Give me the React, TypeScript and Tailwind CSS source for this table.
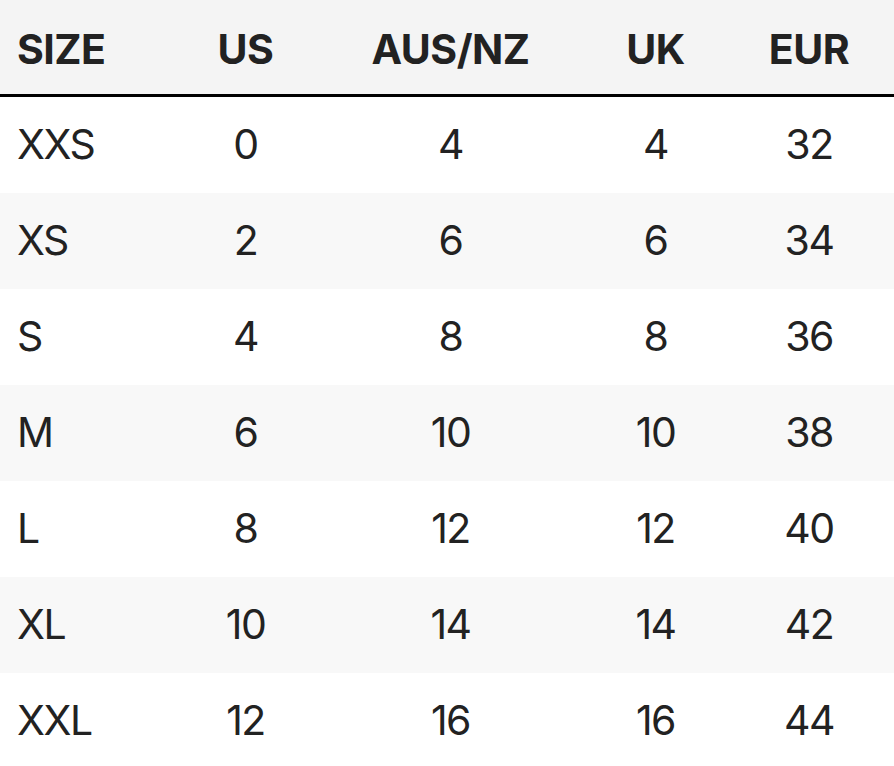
const HEADERS = ["SIZE", "US", "AUS/NZ", "UK", "EUR"];

const ROWS: [string, string, string, string, string][] = [
  ["XXS", "0", "4", "4", "32"],
  ["XS", "2", "6", "6", "34"],
  ["S", "4", "8", "8", "36"],
  ["M", "6", "10", "10", "38"],
  ["L", "8", "12", "12", "40"],
  ["XL", "10", "14", "14", "42"],
  ["XXL", "12", "16", "16", "44"],
];

const GRID = "grid grid-cols-[143px_205px_205px_205px_102px]";

export default function App() {
  return (
    <div className="h-[766px] w-[894px] overflow-hidden bg-white font-['Inter',sans-serif] text-[41px] text-[#222]">
      <div className={`${GRID} h-[97px] items-center border-b-[3px] border-black bg-[#f4f4f4] pt-[5px] font-bold tracking-[-0.5px]`}>
        {HEADERS.map((h, i) => (
          <div key={h} className={i === 0 ? "pl-[17px]" : "text-center"}>
            {h}
          </div>
        ))}
      </div>
      {ROWS.map((row, r) => (
        <div
          key={row[0]}
          className={`${GRID} h-[96px] items-center tracking-[-1.5px] ${r % 2 === 1 ? "bg-[#f8f8f8]" : "bg-white"}`}
        >
          {row.map((cell, i) => (
            <div key={i} className={i === 0 ? "pl-[17px]" : "text-center"}>
              {cell}
            </div>
          ))}
        </div>
      ))}
    </div>
  );
}
